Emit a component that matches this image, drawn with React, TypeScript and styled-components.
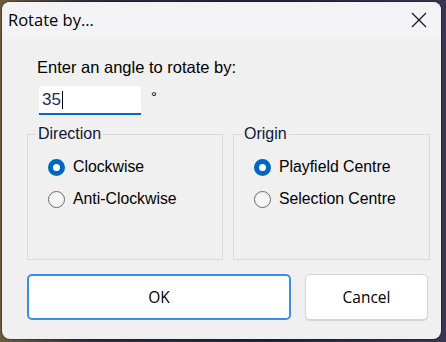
import React, { useState } from "react";
import styled, { createGlobalStyle } from "styled-components";

const GlobalStyle = createGlobalStyle`
  html, body {
    margin: 0;
    padding: 0;
    width: 446px;
    height: 342px;
    overflow: hidden;
    background: linear-gradient(90deg, #6b5a3c 0%, #2c2c3e 20%, #1f2438 60%, #3a3550 100%);
    font-family: "Open Sans", "Noto Sans", sans-serif;
  }
`;

const Window = styled.div`
  margin: 2px 0 0 2px;
  width: 439px;
  height: 337px;
  border-radius: 8px;
  overflow: hidden;
  background: #f0f0f0;
  display: flex;
  flex-direction: column;
  box-shadow: 0 0 0 1px rgba(0, 0, 0, 0.25);
`;

const TitleBar = styled.div`
  height: 36px;
  flex: none;
  display: flex;
  align-items: center;
  justify-content: space-between;
  background: #f3f3f5;
  padding: 0 14px 0 6px;
`;

const Title = styled.span`
  font-family: "Open Sans", "Noto Sans", sans-serif;
  font-size: 16.5px;
  color: #000;
  margin-top: -2px;
`;

const Body = styled.div`
  flex: 1;
  display: flex;
  flex-direction: column;
  padding: 0 11px 0 23px;
`;

const Prompt = styled.div`
  font-family: "Liberation Sans", Arial, sans-serif;
  font-size: 16.5px;
  color: #000;
  margin: 20px 0 0 12px;
  line-height: 18px;
`;

const InputRow = styled.div`
  display: flex;
  align-items: flex-start;
  margin: 10px 0 0 14px;
`;

const AngleInput = styled.div`
  width: 99px;
  height: 27px;
  background: #fff;
  border-bottom: 2px solid #0a66c2;
  display: flex;
  align-items: center;
  padding-left: 3px;
  box-sizing: content-box;
  font-family: "Liberation Sans", Arial, sans-serif;
  font-size: 17px;
  color: #1a2a6a;
`;

const Caret = styled.span`
  display: inline-block;
  width: 1px;
  height: 18px;
  background: #000;
  margin-left: 1px;
`;

const Degree = styled.span`
  font-family: "Liberation Sans", Arial, sans-serif;
  font-size: 15px;
  margin: 2px 0 0 10px;
`;

const Groups = styled.div`
  display: flex;
  gap: 10px;
  margin-top: 9px;
  margin-left: 2px;
`;

const Group = styled.fieldset<{ $width: number }>`
  width: ${(p) => p.$width}px;
  height: 136px;
  box-sizing: border-box;
  margin: 0;
  padding: 0;
  border: 1px solid #dadada;
`;

const Legend = styled.legend`
  font-family: "Liberation Sans", Arial, sans-serif;
  font-size: 16px;
  line-height: 20px;
  color: #10163a;
  padding: 0 2px;
  margin-left: 8px;
`;

const RadioList = styled.div`
  display: flex;
  flex-direction: column;
  gap: 14px;
  padding: 14px 0 0 20px;
`;

const RadioRow = styled.label`
  display: flex;
  align-items: center;
  gap: 8px;
  font-family: "Liberation Sans", Arial, sans-serif;
  font-size: 15.8px;
  color: #000;
  height: 18px;
  cursor: default;
`;

const RadioDot = styled.span<{ $checked: boolean }>`
  width: 17px;
  height: 17px;
  border-radius: 50%;
  box-sizing: border-box;
  flex: none;
  background: ${(p) => (p.$checked ? "#fff" : "#f5f5f5")};
  border: ${(p) => (p.$checked ? "5.5px solid #0067c0" : "1px solid #6a6a6a")};
`;

const Buttons = styled.div`
  display: flex;
  gap: 14px;
  margin: 14px 0 0 2px;
`;

const Button = styled.button<{ $primary?: boolean; $width: number }>`
  width: ${(p) => p.$width}px;
  height: 46px;
  background: #fff;
  border-radius: 5px;
  font-family: "Open Sans", "Noto Sans", sans-serif;
  font-size: 15.5px;
  color: #000;
  border: ${(p) => (p.$primary ? "2px solid #3b8fe0" : "1px solid #d6d6d6")};
  box-shadow: ${(p) => (p.$primary ? "none" : "0 1px 1px rgba(0,0,0,0.12)")};
  padding: 0;
`;

function Radio(props: { label: string; checked: boolean; onSelect(): void }) {
  const { label, checked, onSelect } = props;
  return (
    <RadioRow onClick={onSelect}>
      <RadioDot $checked={checked} />
      {label}
    </RadioRow>
  );
}

export default function App() {
  const [direction, setDirection] = useState("cw");
  const [origin, setOrigin] = useState("playfield");

  return (
    <>
      <GlobalStyle />
      <Window>
        <TitleBar>
          <Title>Rotate by...</Title>
          <svg width="16" height="16" viewBox="0 0 16 16">
            <path d="M1 1 L15 15 M15 1 L1 15" stroke="#1a1a1a" strokeWidth="1.3" />
          </svg>
        </TitleBar>
        <Body>
          <Prompt>Enter an angle to rotate by:</Prompt>
          <InputRow>
            <AngleInput>
              35
              <Caret />
            </AngleInput>
            <Degree>°</Degree>
          </InputRow>
          <Groups>
            <Group $width={197}>
              <Legend>Direction</Legend>
              <RadioList>
                <Radio label="Clockwise" checked={direction === "cw"} onSelect={() => setDirection("cw")} />
                <Radio label="Anti-Clockwise" checked={direction === "acw"} onSelect={() => setDirection("acw")} />
              </RadioList>
            </Group>
            <Group $width={198}>
              <Legend>Origin</Legend>
              <RadioList>
                <Radio
                  label="Playfield Centre"
                  checked={origin === "playfield"}
                  onSelect={() => setOrigin("playfield")}
                />
                <Radio
                  label="Selection Centre"
                  checked={origin === "selection"}
                  onSelect={() => setOrigin("selection")}
                />
              </RadioList>
            </Group>
          </Groups>
          <Buttons>
            <Button $primary $width={264}>
              OK
            </Button>
            <Button $width={123}>Cancel</Button>
          </Buttons>
        </Body>
      </Window>
    </>
  );
}
